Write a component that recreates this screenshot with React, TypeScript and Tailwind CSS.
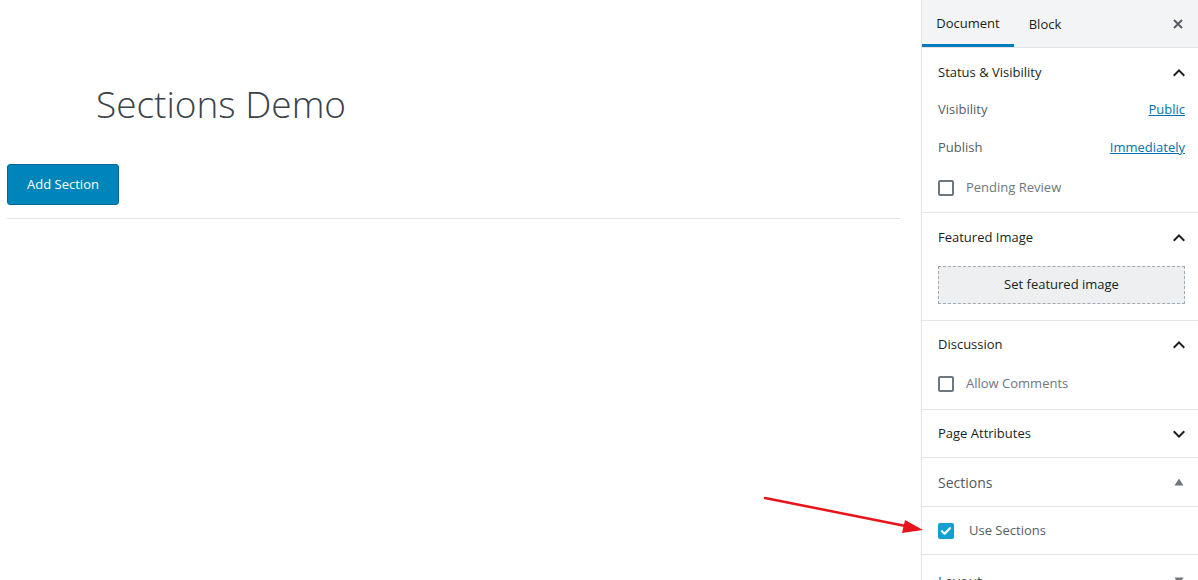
import React from "react";

const font = { fontFamily: '"Open Sans", "Noto Sans", sans-serif' };

function ChevronUp() {
  return (
    <svg width="24" height="24" viewBox="0 0 24 24" className="text-[#191e23]">
      <path d="M12 8l-6 6 1.41 1.41L12 10.83l4.59 4.58L18 14z" fill="currentColor" />
    </svg>
  );
}
function ChevronDown() {
  return (
    <svg width="24" height="24" viewBox="0 0 24 24" className="text-[#191e23]">
      <path d="M12 16l-6-6 1.41-1.41L12 13.17l4.59-4.58L18 10z" fill="currentColor" />
    </svg>
  );
}

function Checkbox({ checked }: { checked?: boolean }) {
  if (checked) {
    return (
      <span className="flex h-4 w-4 shrink-0 items-center justify-center rounded-[2px] bg-[#11a0d2]">
        <svg width="12" height="12" viewBox="0 0 12 12">
          <path d="M2 6.2l2.6 2.6L10 3.2" stroke="white" strokeWidth="2.2" fill="none" strokeLinecap="round" strokeLinejoin="round" />
        </svg>
      </span>
    );
  }
  return <span className="block h-4 w-4 shrink-0 rounded-[2px] border-2 border-[#6c7781] bg-white" />;
}

function PanelTitle({ title, open = true, h = "h-[48px]" }: { title: string; open?: boolean; h?: string }) {
  return (
    <div className={`flex ${h} shrink-0 items-center justify-between pl-4 pr-[7px]`}>
      <span className="text-[13px] font-medium text-[#191e23]">{title}</span>
      {open ? <ChevronUp /> : <ChevronDown />}
    </div>
  );
}

export default function App() {
  return (
    <div className="relative flex h-[580px] w-[1198px] overflow-hidden bg-white" style={font}>
      {/* Main editor area */}
      <div className="flex w-[921px] shrink-0 flex-col">
        <div className="h-[72px] shrink-0" />
        <h1 className="shrink-0 pl-[96px] text-[37px] font-light leading-[64px] text-[#3c4248]">Sections Demo</h1>
        <div className="h-[28px] shrink-0" />
        <div className="shrink-0 pl-[7px]">
          <button className="h-[41px] w-[112px] rounded-[3px] border border-[#006a95] bg-[#0085ba] text-[13px] font-medium text-white">
            Add Section
          </button>
        </div>
        <div className="ml-[7px] mr-[21px] mt-[13px] shrink-0 border-t border-[#e2e4e7]" />
      </div>

      {/* Sidebar */}
      <div className="flex w-[277px] shrink-0 flex-col border-l border-[#e2e4e7]">
        <div className="flex h-[48px] shrink-0 items-stretch justify-between border-b border-[#e2e4e7] bg-[#f3f4f5]">
          <div className="flex">
            <div className="flex w-[92px] items-center justify-center border-b-[3px] border-[#007cba] pt-[3px] text-[13px] font-medium text-[#191e23]">
              Document
            </div>
            <div className="flex w-[62px] items-center justify-center pt-[3px] text-[13px] text-[#191e23]">Block</div>
          </div>
          <div className="flex items-center pr-[14px]">
            <svg width="12" height="12" viewBox="0 0 12 12">
              <path d="M2 2l8 8M10 2l-8 8" stroke="#555d66" strokeWidth="2" />
            </svg>
          </div>
        </div>

        {/* Status & Visibility */}
        <div className="shrink-0 border-b border-[#e2e4e7] pb-[11px]">
          <PanelTitle title="Status & Visibility" h="h-[49px]" />
          <div className="flex flex-col px-4 pr-[13px] text-[13px]">
            <div className="flex h-[26px] items-center justify-between">
              <span className="text-[#555d66]">Visibility</span>
              <span className="text-[#0073aa] underline">Public</span>
            </div>
            <div className="mt-3 flex h-[26px] items-center justify-between">
              <span className="text-[#555d66]">Publish</span>
              <span className="text-[#0073aa] underline">Immediately</span>
            </div>
            <div className="mt-[14px] flex h-[26px] items-center gap-3">
              <Checkbox />
              <span className="text-[#6c7781]">Pending Review</span>
            </div>
          </div>
        </div>

        {/* Featured Image */}
        <div className="shrink-0 border-b border-[#e2e4e7] pb-[16px]">
          <PanelTitle title="Featured Image" h="h-[49px]" />
          <div className="pl-4 pr-[13px] pt-1">
            <div className="flex h-[38px] items-center justify-center border border-dashed border-[#a2aab2] bg-[#edeff0] text-[13px] text-[#191e23]">
              Set featured image
            </div>
          </div>
        </div>

        {/* Discussion */}
        <div className="shrink-0 border-b border-[#e2e4e7] pb-3">
          <PanelTitle title="Discussion" />
          <div className="mt-[2px] flex h-[26px] items-center gap-3 px-4 text-[13px]">
            <Checkbox />
            <span className="text-[#6c7781]">Allow Comments</span>
          </div>
        </div>

        {/* Page Attributes */}
        <div className="shrink-0 border-b border-[#e2e4e7]">
          <PanelTitle title="Page Attributes" open={false} h="h-[47px]" />
        </div>

        {/* Sections metabox */}
        <div className="flex h-[49px] shrink-0 items-center justify-between border-b border-[#e2e4e7] pl-4 pr-[14px]">
          <span className="text-[14px] font-medium text-[#50575e]">Sections</span>
          <svg width="10" height="8" viewBox="0 0 10 8">
            <path d="M5 0.5L9.5 7.5H0.5z" fill="#72777c" />
          </svg>
        </div>
        <div className="flex h-[48px] shrink-0 items-center gap-[15px] border-b border-[#e2e4e7] px-4 text-[13px]">
          <Checkbox checked />
          <span className="text-[#555d66]">Use Sections</span>
        </div>
        <div className="flex h-[48px] shrink-0 items-center justify-between pl-4 pr-[14px] pt-[4px]">
          <span className="text-[14px] font-medium text-[#50575e]">Layout</span>
          <svg width="10" height="8" viewBox="0 0 10 8">
            <path d="M0.5 0.5H9.5L5 7.5z" fill="#72777c" />
          </svg>
        </div>
      </div>

      {/* Annotation arrow */}
      <svg className="pointer-events-none absolute left-0 top-0" width="1198" height="580">
        <line x1="765" y1="498" x2="908" y2="526.5" stroke="#e8141b" strokeWidth="2.5" strokeLinecap="round" />
        <path d="M923 530 L905 520 L902 533 Z" fill="#e8141b" />
      </svg>
    </div>
  );
}
